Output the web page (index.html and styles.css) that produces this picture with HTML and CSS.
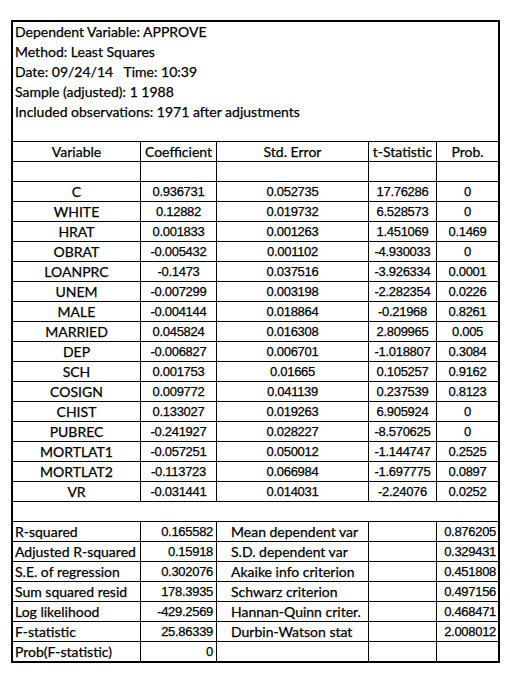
FILE: index.html
```html
<!DOCTYPE html>
<html>
<head>
<meta charset="utf-8">
<link rel="stylesheet" href="styles.css">
</head>
<body>
<div class="sheet">
  <div class="info">
    <div class="line">Dependent Variable: APPROVE</div>
    <div class="line">Method: Least Squares</div>
    <div class="line">Date: 09/24/14&nbsp;&nbsp; Time: 10:39</div>
    <div class="line">Sample (adjusted): 1 1988</div>
    <div class="line">Included observations: 1971 after adjustments</div>
    <div class="line"></div>
  </div>
  <div class="row">
    <div class="c">Variable</div><div class="c">Coefficient</div><div class="c">Std. Error</div><div class="c">t-Statistic</div><div class="c">Prob.</div>
  </div>
  <div class="row">
    <div class="c"></div><div class="c"></div><div class="c"></div><div class="c"></div><div class="c"></div>
  </div>
  <div class="row data"><div class="c">C</div><div class="c n">0.936731</div><div class="c n">0.052735</div><div class="c n">17.76286</div><div class="c n">0</div></div>
  <div class="row data"><div class="c">WHITE</div><div class="c n">0.12882</div><div class="c n">0.019732</div><div class="c n">6.528573</div><div class="c n">0</div></div>
  <div class="row data"><div class="c">HRAT</div><div class="c n">0.001833</div><div class="c n">0.001263</div><div class="c n">1.451069</div><div class="c n">0.1469</div></div>
  <div class="row data"><div class="c">OBRAT</div><div class="c n">-0.005432</div><div class="c n">0.001102</div><div class="c n">-4.930033</div><div class="c n">0</div></div>
  <div class="row data"><div class="c">LOANPRC</div><div class="c n">-0.1473</div><div class="c n">0.037516</div><div class="c n">-3.926334</div><div class="c n">0.0001</div></div>
  <div class="row data"><div class="c">UNEM</div><div class="c n">-0.007299</div><div class="c n">0.003198</div><div class="c n">-2.282354</div><div class="c n">0.0226</div></div>
  <div class="row data"><div class="c">MALE</div><div class="c n">-0.004144</div><div class="c n">0.018864</div><div class="c n">-0.21968</div><div class="c n">0.8261</div></div>
  <div class="row data"><div class="c">MARRIED</div><div class="c n">0.045824</div><div class="c n">0.016308</div><div class="c n">2.809965</div><div class="c n">0.005</div></div>
  <div class="row data"><div class="c">DEP</div><div class="c n">-0.006827</div><div class="c n">0.006701</div><div class="c n">-1.018807</div><div class="c n">0.3084</div></div>
  <div class="row data"><div class="c">SCH</div><div class="c n">0.001753</div><div class="c n">0.01665</div><div class="c n">0.105257</div><div class="c n">0.9162</div></div>
  <div class="row data"><div class="c">COSIGN</div><div class="c n">0.009772</div><div class="c n">0.041139</div><div class="c n">0.237539</div><div class="c n">0.8123</div></div>
  <div class="row data"><div class="c">CHIST</div><div class="c n">0.133027</div><div class="c n">0.019263</div><div class="c n">6.905924</div><div class="c n">0</div></div>
  <div class="row data"><div class="c">PUBREC</div><div class="c n">-0.241927</div><div class="c n">0.028227</div><div class="c n">-8.570625</div><div class="c n">0</div></div>
  <div class="row data"><div class="c">MORTLAT1</div><div class="c n">-0.057251</div><div class="c n">0.050012</div><div class="c n">-1.144747</div><div class="c n">0.2525</div></div>
  <div class="row data"><div class="c">MORTLAT2</div><div class="c n">-0.113723</div><div class="c n">0.066984</div><div class="c n">-1.697775</div><div class="c n">0.0897</div></div>
  <div class="row data"><div class="c">VR</div><div class="c n">-0.031441</div><div class="c n">0.014031</div><div class="c n">-2.24076</div><div class="c n">0.0252</div></div>
  <div class="row blank"></div>
  <div class="row stat"><div class="c">R-squared</div><div class="c n">0.165582</div><div class="c">Mean dependent var</div><div class="c"></div><div class="c n">0.876205</div></div>
  <div class="row stat"><div class="c">Adjusted R-squared</div><div class="c n">0.15918</div><div class="c">S.D. dependent var</div><div class="c"></div><div class="c n">0.329431</div></div>
  <div class="row stat"><div class="c">S.E. of regression</div><div class="c n">0.302076</div><div class="c">Akaike info criterion</div><div class="c"></div><div class="c n">0.451808</div></div>
  <div class="row stat"><div class="c">Sum squared resid</div><div class="c n">178.3935</div><div class="c">Schwarz criterion</div><div class="c"></div><div class="c n">0.497156</div></div>
  <div class="row stat"><div class="c">Log likelihood</div><div class="c n">-429.2569</div><div class="c">Hannan-Quinn criter.</div><div class="c"></div><div class="c n">0.468471</div></div>
  <div class="row stat"><div class="c">F-statistic</div><div class="c n">25.86339</div><div class="c">Durbin-Watson stat</div><div class="c"></div><div class="c n">2.008012</div></div>
  <div class="row stat"><div class="c">Prob(F-statistic)</div><div class="c n">0</div><div class="c"></div><div class="c"></div><div class="c"></div></div>
</div>
</body>
</html>
```

FILE: styles.css
```css
* { box-sizing: border-box; }
html, body { margin: 0; padding: 0; background: #fff; }
body {
  font-family: Lato, "Open Sans", sans-serif;
  font-size: 14px;
  color: #000;
  -webkit-text-stroke: 0.25px #000;
}
.sheet {
  margin: 20px 0 0 11px;
  width: 489px;
  border: 2px solid #000;
}
.info { height: 119px; }
.line {
  height: 20px;
  line-height: 20px;
  padding-left: 2px;
  white-space: nowrap;
}
.row {
  display: grid;
  grid-template-columns: 127px 76px 152px 68px 62px;
  height: 20px;
  border-top: 1px solid #000;
}
.c {
  height: 19px;
  line-height: 20px;
  text-align: center;
  white-space: nowrap;
  overflow: hidden;
}
.c + .c { border-left: 1px solid #000; }
.row.blank { display: block; }
.c.n {
  font-family: "Liberation Sans", Arial, sans-serif;
  font-size: 13px;
  letter-spacing: -0.3px;
}
.stat .c:nth-child(1) { text-align: left; padding-left: 2px; }
.stat .c:nth-child(2) { text-align: right; padding-right: 3px; }
.stat .c:nth-child(3) { text-align: left; padding-left: 14px; }
.stat .c:nth-child(5) { text-align: right; padding-right: 2px; }
```
